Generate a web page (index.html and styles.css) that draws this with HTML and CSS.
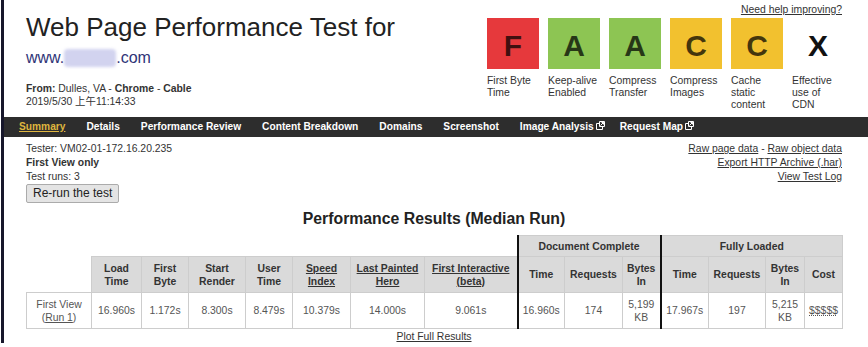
FILE: index.html
```html
<!DOCTYPE html>
<html lang="en">

<head>
    <meta charset="UTF-8">
    <meta name="viewport" content="width=device-width, initial-scale=1.0">
    <title>WebPagetest Test Result</title>
    <link rel="stylesheet" href="styles.css">
</head>

<body>
    <div class="page">
        <header class="top">
            <div class="test-title">
                <h1>Web Page Performance Test for</h1>
                <div class="test-url">www.<span class="masked"></span>.com</div>
                <p class="test-from"><b>From:</b> Dulles, VA - <b>Chrome</b> - <b>Cable</b><br>2019/5/30 上午11:14:33</p>
            </div>
            <div class="grades">
                <a href="#" class="help-link">Need help improving?</a>
                <ul class="grade-list">
                    <li><div class="grade grade-f">F</div><span class="grade-label">First Byte<br>Time</span></li>
                    <li><div class="grade grade-a">A</div><span class="grade-label">Keep-alive<br>Enabled</span></li>
                    <li><div class="grade grade-a">A</div><span class="grade-label">Compress<br>Transfer</span></li>
                    <li><div class="grade grade-c">C</div><span class="grade-label">Compress<br>Images</span></li>
                    <li><div class="grade grade-c">C</div><span class="grade-label">Cache<br>static<br>content</span></li>
                    <li><div class="grade grade-x">X</div><span class="grade-label">Effective<br>use of<br>CDN</span></li>
                </ul>
            </div>
        </header>

        <nav class="tabs">
            <a href="#" class="current">Summary</a>
            <a href="#">Details</a>
            <a href="#">Performance Review</a>
            <a href="#">Content Breakdown</a>
            <a href="#">Domains</a>
            <a href="#">Screenshot</a>
            <a href="#" class="external">Image Analysis<svg class="ext" width="9" height="9" viewBox="0 0 9 9"><path d="M3 2.5H0.5v6h6V6" fill="none" stroke="#fff"/><path d="M3.5 0.5h5v5h-5z" fill="none" stroke="#fff"/><path d="M4.5 4.5l3-3M5.5 1.5h2v2" fill="none" stroke="#fff"/></svg></a>
            <a href="#" class="external">Request Map<svg class="ext" width="9" height="9" viewBox="0 0 9 9"><path d="M3 2.5H0.5v6h6V6" fill="none" stroke="#fff"/><path d="M3.5 0.5h5v5h-5z" fill="none" stroke="#fff"/><path d="M4.5 4.5l3-3M5.5 1.5h2v2" fill="none" stroke="#fff"/></svg></a>
        </nav>

        <div class="info">
            <div class="run-info">
                <div>Tester: VM02-01-172.16.20.235</div>
                <div><b>First View only</b></div>
                <div>Test runs: 3</div>
                <button class="rerun">Re-run the test</button>
            </div>
            <div class="exports">
                <div><a href="#">Raw page data</a> - <a href="#">Raw object data</a></div>
                <div><a href="#">Export HTTP Archive (.har)</a></div>
                <div><a href="#">View Test Log</a></div>
            </div>
        </div>

        <div class="results">
            <h2>Performance Results (Median Run)</h2>
            <table class="result-table">
                <colgroup>
                    <col style="width: 65px">
                    <col style="width: 50px">
                    <col style="width: 47px">
                    <col style="width: 57px">
                    <col style="width: 47px">
                    <col style="width: 58px">
                    <col style="width: 74px">
                    <col style="width: 93px">
                    <col style="width: 47px">
                    <col style="width: 58px">
                    <col style="width: 38px">
                    <col style="width: 48px">
                    <col style="width: 57px">
                    <col style="width: 39px">
                    <col style="width: 38px">
                </colgroup>
                <tr class="group-row">
                    <th colspan="8" class="blank"></th>
                    <th colspan="3" class="split">Document Complete</th>
                    <th colspan="4" class="split">Fully Loaded</th>
                </tr>
                <tr class="head-row">
                    <th class="blank"></th>
                    <th>Load<br>Time</th>
                    <th>First<br>Byte</th>
                    <th>Start<br>Render</th>
                    <th>User<br>Time</th>
                    <th><a href="#">Speed<br>Index</a></th>
                    <th><a href="#">Last Painted<br>Hero</a></th>
                    <th><a href="#">First Interactive<br>(beta)</a></th>
                    <th class="split">Time</th>
                    <th>Requests</th>
                    <th>Bytes<br>In</th>
                    <th class="split">Time</th>
                    <th>Requests</th>
                    <th>Bytes<br>In</th>
                    <th>Cost</th>
                </tr>
                <tr class="data-row">
                    <td>First View<br>(<a href="#">Run 1</a>)</td>
                    <td>16.960s</td>
                    <td>1.172s</td>
                    <td>8.300s</td>
                    <td>8.479s</td>
                    <td>10.379s</td>
                    <td>14.000s</td>
                    <td>9.061s</td>
                    <td class="split">16.960s</td>
                    <td>174</td>
                    <td>5,199<br>KB</td>
                    <td class="split">17.967s</td>
                    <td>197</td>
                    <td>5,215<br>KB</td>
                    <td><a href="#" class="cost">$$$$$</a></td>
                </tr>
            </table>
            <div class="plot"><a href="#">Plot Full Results</a></div>
        </div>
    </div>
</body>

</html>
```

FILE: styles.css
```css
body {
    margin: 0;
    font-family: "Liberation Sans", Arial, "Noto Sans CJK SC", sans-serif;
    font-size: 10.4px;
    color: #333;
    background-color: #fff;
}

a {
    color: inherit;
}

.page {
    margin-left: 1px;
    border-left: 3px solid #17172b;
    min-height: 340px;
}

/* header: title on the left, grades on the right */
.top {
    display: flex;
    justify-content: space-between;
    align-items: flex-start;
    padding: 0 26px 0 22px;
}

h1 {
    margin: 12px 0 0;
    font-size: 26px;
    line-height: 30px;
    font-weight: normal;
    color: #222;
}

.test-url {
    margin-top: 6px;
    font-size: 16px;
    line-height: 20px;
    color: #2f3477;
}

.masked {
    display: inline-block;
    width: 52px;
    height: 18px;
    vertical-align: -4px;
    background-color: #d2d3ef;
    border-radius: 4px;
    filter: blur(1.5px);
}

.test-from {
    margin: 14px 0 0;
    line-height: 13px;
}

.grades {
    display: flex;
    flex-direction: column;
    align-items: flex-end;
}

.help-link {
    display: block;
    margin-top: 3px;
    line-height: 13px;
}

.grade-list {
    display: flex;
    gap: 9px;
    margin: 2px -2px 0 0;
    padding: 0;
    list-style: none;
}

.grade-list li {
    width: 52px;
}

.grade {
    display: flex;
    align-items: center;
    justify-content: center;
    width: 52px;
    height: 51px;
    padding-top: 4px;
    box-sizing: border-box;
    font-size: 30px;
    font-weight: bold;
    color: rgba(0, 0, 0, 0.72);
}

.grade-f {
    background-color: #e6393c;
}

.grade-a {
    background-color: #8dc553;
}

.grade-c {
    background-color: #f2c12f;
}

.grade-x {
    color: #111;
}

.grade-label {
    display: block;
    margin-top: 6px;
    line-height: 12px;
    white-space: nowrap;
}

/* tab bar */
.tabs {
    display: flex;
    gap: 21px;
    margin-top: 6px;
    height: 20px;
    padding-left: 15px;
    line-height: 20px;
    background-color: #2d2d2d;
    font-size: 10.2px;
    font-weight: bold;
}

.tabs a {
    color: #fff;
    text-decoration: none;
    white-space: nowrap;
}

.tabs a.current {
    color: #dfb53e;
    text-decoration: underline;
}

.tabs a.external {
    margin-right: -6px;
}

.ext {
    margin-left: 2px;
    vertical-align: 0;
}

/* test info */
.info {
    display: flex;
    justify-content: space-between;
    padding: 5px 26px 0 22px;
    line-height: 14px;
}

.exports {
    text-align: right;
}

.rerun {
    display: block;
    margin: 0;
    padding: 1px 6px;
    font-family: "Liberation Sans", Arial, sans-serif;
    font-size: 12px;
    line-height: 15px;
    color: #222;
    background-color: #e4e4e4;
    border: 1px solid #ababab;
    border-radius: 2px;
}

/* results table */
.results {
    padding: 0 26px 0 22px;
}

h2 {
    margin: 7px 0 0;
    font-size: 15.8px;
    line-height: 18px;
    text-align: center;
    color: #222;
}

.result-table {
    margin-top: 7px;
    width: 816px;
    table-layout: fixed;
    border-collapse: collapse;
}

.result-table th,
.result-table td {
    padding: 0 3px;
    border: 1px solid #cdcdcd;
    text-align: center;
    line-height: 13px;
    white-space: nowrap;
}

.result-table th {
    background-color: #dadada;
    font-weight: bold;
    color: #333;
}

.result-table th.blank {
    border: none;
    background-color: transparent;
}

.result-table td {
    color: #555;
}

.result-table .split {
    border-left: 2px solid #111;
}

.group-row th {
    height: 20px;
}

.head-row th,
.data-row td {
    height: 35px;
}

.cost {
    text-decoration-style: dotted;
}

.plot {
    margin-top: 1px;
    text-align: center;
    line-height: 13px;
}
```
